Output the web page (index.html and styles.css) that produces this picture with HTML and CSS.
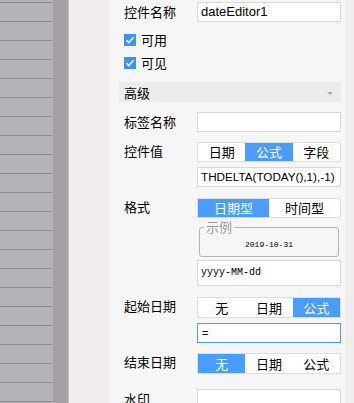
FILE: index.html
```html
<!DOCTYPE html>
<html lang="zh-CN">
<head>
    <meta charset="UTF-8">
    <meta name="viewport" content="width=device-width, initial-scale=1.0">
    <title>控件属性</title>
    <link rel="stylesheet" href="styles.css">
</head>
<body>
<div class="app">
    <!-- left widget list -->
    <div class="list"></div>
    <div class="rail"></div>

    <!-- property panel -->
    <div class="panel">
        <div class="field f-name">
            <div class="label">控件名称</div>
            <div class="control"><div class="input">dateEditor1</div></div>
        </div>

        <div class="check c-enabled">
            <span class="box"><svg width="12" height="12" viewBox="0 0 12 12"><polyline points="2.5,6.2 4.8,8.6 9.6,3.2" fill="none" stroke="#fff" stroke-width="1.6"/></svg></span>
            <span>可用</span>
        </div>
        <div class="check c-visible">
            <span class="box"><svg width="12" height="12" viewBox="0 0 12 12"><polyline points="2.5,6.2 4.8,8.6 9.6,3.2" fill="none" stroke="#fff" stroke-width="1.6"/></svg></span>
            <span>可见</span>
        </div>

        <div class="section">
            <span>高级</span>
            <span class="arrow"></span>
        </div>

        <div class="field f-label">
            <div class="label">标签名称</div>
            <div class="control"><div class="input"></div></div>
        </div>

        <div class="field f-value">
            <div class="label top">控件值</div>
            <div class="control">
                <div class="seg">
                    <span>日期</span>
                    <span class="on">公式</span>
                    <span>字段</span>
                </div>
                <div class="input formula">THDELTA(TODAY(),1),-1)</div>
            </div>
        </div>

        <div class="field f-format">
            <div class="label top">格式</div>
            <div class="control">
                <div class="seg two">
                    <span class="on">日期型</span>
                    <span>时间型</span>
                </div>
                <fieldset class="sample">
                    <legend>示例</legend>
                    <div class="sample-date">2019-10-31</div>
                </fieldset>
                <div class="input pattern">yyyy-MM-dd</div>
            </div>
        </div>

        <div class="field f-start">
            <div class="label top">起始日期</div>
            <div class="control">
                <div class="seg tall">
                    <span>无</span>
                    <span>日期</span>
                    <span class="on">公式</span>
                </div>
                <div class="input focus">=</div>
            </div>
        </div>

        <div class="field f-end">
            <div class="label top">结束日期</div>
            <div class="control">
                <div class="seg tall">
                    <span class="on">无</span>
                    <span>日期</span>
                    <span>公式</span>
                </div>
            </div>
        </div>

        <div class="field f-mark">
            <div class="label">水印</div>
            <div class="control"><div class="input"></div></div>
        </div>
    </div>
</div>
</body>
</html>
```

FILE: styles.css
```css
body {
    margin: 0;
    overflow: hidden;
    font-family: "Noto Sans CJK SC", "Liberation Sans", sans-serif;
    font-size: 13px;
    color: #000;
}
.app {
    display: flex;
    height: 403px;
    background: #f0ecef;
}
.list {
    width: 53px;
    flex: none;
    background-color: #b5b3b7;
    background-image: repeating-linear-gradient(to bottom, transparent 0 18px, #8e8c90 18px 19px);
    background-size: 52px 19px;
    background-repeat: repeat-y;
    background-position: 0 3px;
}
.rail {
    width: 15px;
    flex: none;
    background: #a49fa6;
    border-right: 1px solid #c4c1c5;
}
.panel {
    width: 236px;
    flex: none;
    margin-left: 40px;
    background: #f6f6f6;
    padding: 2px 4px 0 10px;
    box-sizing: border-box;
    overflow: hidden;
}
.field {
    display: flex;
}
.label {
    width: 78px;
    flex: none;
    padding-left: 5px;
    box-sizing: border-box;
    line-height: 20px;
}
.label.top {
    line-height: 17px;
}
.control {
    width: 144px;
    display: flex;
    flex-direction: column;
}
.input {
    height: 20px;
    box-sizing: border-box;
    border: 1px solid #d9d9d9;
    background: #fff;
    padding-left: 3px;
    font-family: "Liberation Sans", Arial, sans-serif;
    font-size: 13px;
    line-height: 18px;
    white-space: nowrap;
    overflow: hidden;
}
.input.formula {
    margin-top: 5px;
    font-size: 11.7px;
}
.input.pattern {
    height: 26px;
    line-height: 24px;
    font-family: "Liberation Mono", monospace;
    font-size: 10px;
    margin-top: 3px;
}
.input.focus {
    margin-top: 5px;
    border-color: #4a9cff;
    padding-left: 4px;
    font-size: 11px;
}
.check {
    display: flex;
    align-items: center;
    gap: 5px;
    padding-left: 5px;
    height: 12px;
    line-height: 12px;
}
.check .box {
    width: 12px;
    height: 12px;
    background: #3d92f3;
    display: flex;
}
.seg {
    display: flex;
    height: 20px;
    box-sizing: border-box;
    border: 1px solid #dedede;
    background: #fff;
}
.seg.tall {
    height: 21px;
}
.seg span {
    flex: 1;
    text-align: center;
    line-height: 18px;
}
.seg.tall span {
    line-height: 19px;
}
.seg .on {
    background: #4a9cff;
    color: #fff;
}
.sample {
    margin: 3px 2px 0;
    padding: 6px 0 5px 4px;
    border: 1px solid #b3b3b3;
    border-radius: 3px;
    min-width: 0;
}
.sample legend {
    padding: 0 2px;
    line-height: 12px;
    color: #9a9a9a;
}
.sample-date {
    text-align: center;
    font-family: "Liberation Mono", monospace;
    font-size: 8px;
    line-height: 12px;
    padding-right: 4px;
}
.section {
    display: flex;
    align-items: center;
    height: 20px;
    background: #ececec;
    padding: 0 8px 0 5px;
}
.arrow {
    margin-left: auto;
    border-left: 3px solid transparent;
    border-right: 3px solid transparent;
    border-top: 3px solid #aaa;
    margin-top: 2px;
}
.f-name { margin-bottom: 12px; }
.c-enabled { margin-bottom: 11px; }
.c-visible { margin-bottom: 13px; }
.section { margin-bottom: 10px; }
.f-label { margin-bottom: 10px; }
.f-value { margin-bottom: 11px; }
.f-format { margin-bottom: 11px; }
.f-start { margin-bottom: 10px; }
.f-end { margin-bottom: 15px; }
```
